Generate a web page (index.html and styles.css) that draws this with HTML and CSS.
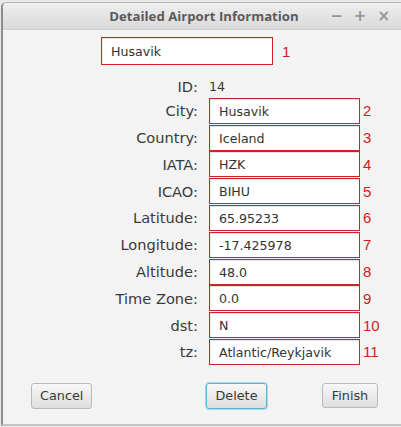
FILE: index.html
```html
<!DOCTYPE html>
<html>
<head>
<meta charset="utf-8">
<link rel="stylesheet" href="styles.css">
</head>
<body>
<div class="window">
  <div class="titlebar">
    <span class="title">Detailed Airport Information</span>
    <div class="controls">
      <span class="ctl">&minus;</span>
      <span class="ctl">+</span>
      <span class="ctl">&times;</span>
    </div>
  </div>
  <div class="content">
    <div class="name-row">
      <div class="box name-box">Husavik</div>
      <span class="num">1</span>
    </div>
    <div class="form">
      <span class="label id-label">ID:</span><span class="id-value">14</span><span></span>
      <span class="label">City:</span><div class="box">Husavik</div><span class="num">2</span>
      <span class="label">Country:</span><div class="box">Iceland</div><span class="num">3</span>
      <span class="label">IATA:</span><div class="box">HZK</div><span class="num">4</span>
      <span class="label">ICAO:</span><div class="box">BIHU</div><span class="num">5</span>
      <span class="label">Latitude:</span><div class="box">65.95233</div><span class="num">6</span>
      <span class="label">Longitude:</span><div class="box">-17.425978</div><span class="num">7</span>
      <span class="label">Altitude:</span><div class="box">48.0</div><span class="num">8</span>
      <span class="label">Time Zone:</span><div class="box">0.0</div><span class="num">9</span>
      <span class="label">dst:</span><div class="box">N</div><span class="num">10</span>
      <span class="label">tz:</span><div class="box">Atlantic/Reykjavik</div><span class="num">11</span>
    </div>
    <div class="buttons">
      <button class="btn cancel">Cancel</button>
      <button class="btn delete">Delete</button>
      <button class="btn finish">Finish</button>
    </div>
  </div>
</div>
</body>
</html>
```
FILE: styles.css
```css
html, body {
  margin: 0;
  padding: 0;
}
body {
  width: 401px;
  height: 427px;
  overflow: hidden;
  background: #e9e9e9;
  font-family: "DejaVu Sans", sans-serif;
}
.window {
  margin: 2px 0 0 1px;
  border-left: 2px solid #8c8c8c;
  border-top: 1px solid #b8b8b8;
  border-bottom: 2px solid #c4c4c4;
  border-radius: 5px 0 0 0;
  background: #f2f2f2;
  height: 421px;
  display: flex;
  flex-direction: column;
}
.titlebar {
  height: 26px;
  flex: none;
  background: linear-gradient(#eeeeee, #dadada);
  border-bottom: 1px solid #cfcfcf;
  border-radius: 4px 0 0 0;
  display: flex;
  align-items: center;
  justify-content: center;
  position: relative;
}
.title {
  font-family: "Open Sans", sans-serif;
  font-weight: 700;
  font-size: 13.2px;
  color: #5a5a5a;
  margin-left: 4px;
}
.controls {
  position: absolute;
  right: 11px;
  top: 0;
  height: 26px;
  display: flex;
  align-items: center;
  gap: 11px;
  color: #959595;
  font-size: 15px;
  font-weight: 700;
}
.content {
  flex: 1;
  display: flex;
  flex-direction: column;
  background: #f3f3f3;
}
.name-row {
  display: flex;
  align-items: center;
  margin-top: 7px;
  padding-left: 98px;
}
.box {
  box-sizing: border-box;
  background: #ffffff;
  border: 1px solid #d11f26;
  box-shadow: inset 0 1px 0 #e4e4e4, inset 1px 0 0 #f0f0f0;
  font-size: 12.6px;
  color: #333;
  display: flex;
  align-items: center;
  padding-left: 9px;
  padding-top: 1px;
  height: 26px;
}
.name-box {
  width: 172px;
  height: 28px;
}
.num {
  font-family: "Liberation Sans", sans-serif;
  font-size: 15px;
  color: #d01c22;
  line-height: 1;
}
.name-row .num {
  margin-left: 9px;
}
.form {
  display: grid;
  grid-template-columns: 195px 151px auto;
  column-gap: 11px;
  row-gap: 0.8px;
  margin-top: 11px;
  align-items: center;
}
.form .num {
  margin-left: -8px;
}
.label {
  text-align: right;
  font-size: 14.6px;
  color: #3a3a3a;
}
.id-label {
  height: 21px;
  line-height: 21px;
}
.id-value {
  font-size: 12.6px;
  color: #333;
}
.buttons {
  display: flex;
  align-items: center;
  margin-top: 18px;
  padding-left: 28px;
}
.btn {
  font-family: "DejaVu Sans", sans-serif;
  font-size: 12.8px;
  color: #3a3a3a;
  height: 26px;
  box-sizing: border-box;
  border: 1px solid #b9b9b9;
  border-radius: 3px;
  background: linear-gradient(#f7f7f7, #dedede);
  padding: 0 8px;
  margin: 0;
}
.cancel {
  width: 61px;
}
.delete {
  width: 61px;
  margin-left: 114px;
  border: 1px solid #5fb2d6;
  box-shadow: 0 0 0 1px #a9d6ea;
}
.finish {
  width: 56px;
  margin-left: 55px;
  height: 25px;
}
```
